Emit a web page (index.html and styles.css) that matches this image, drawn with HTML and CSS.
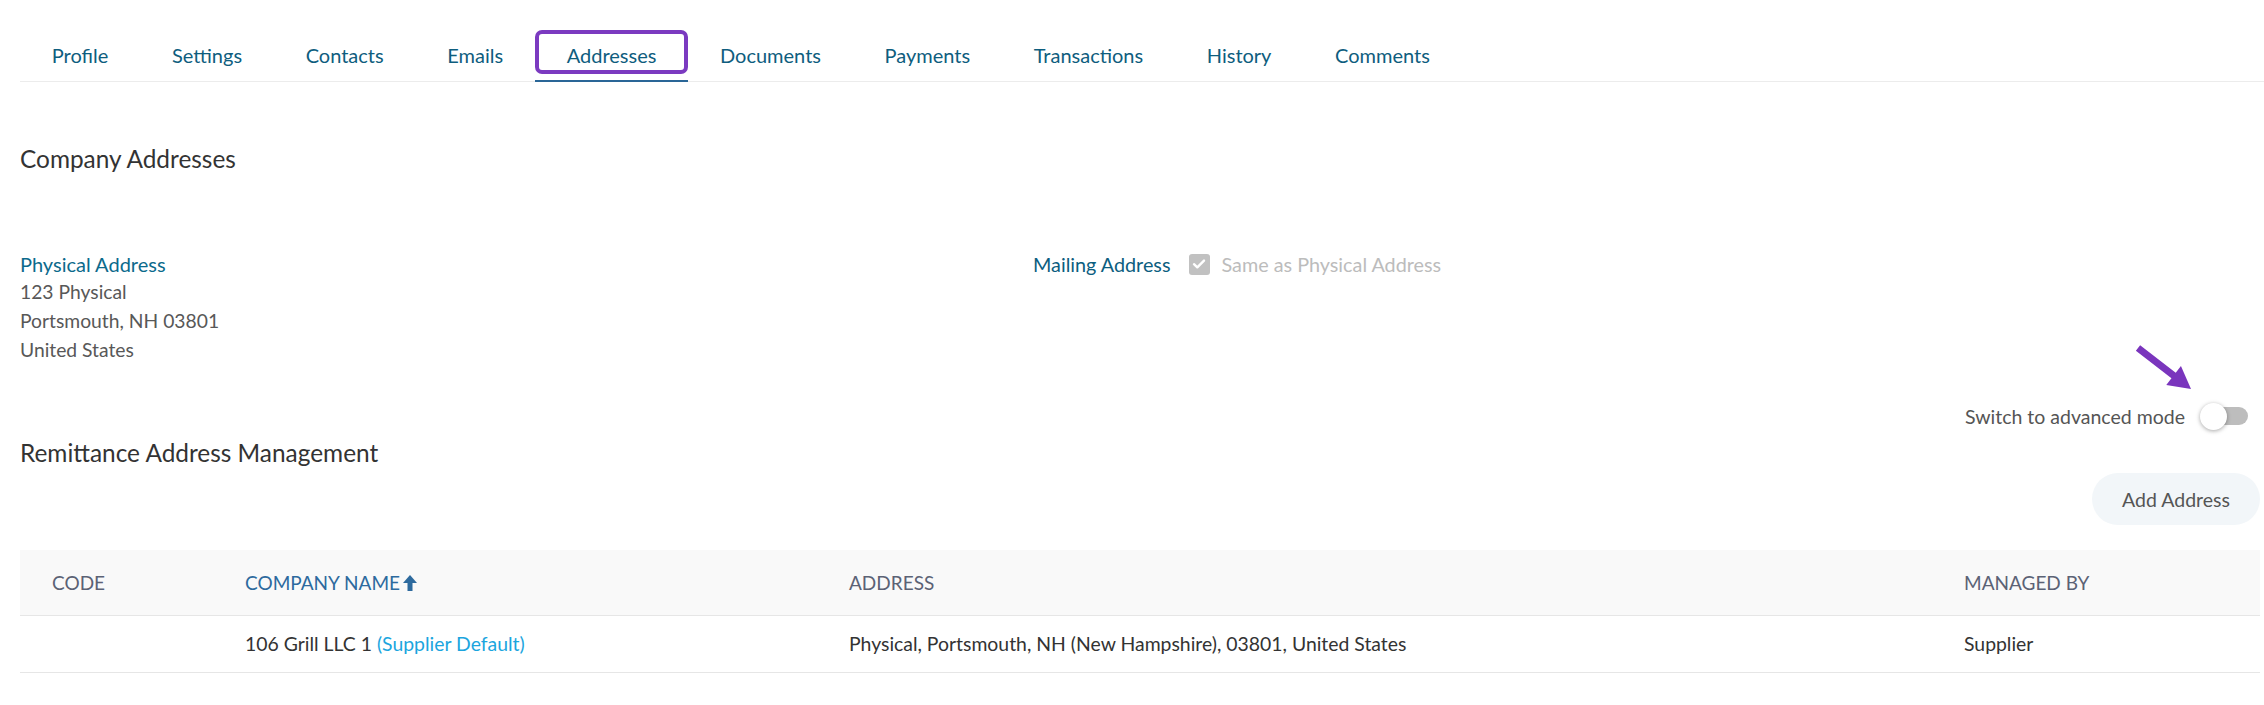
FILE: index.html
```html
<!DOCTYPE html>
<html>
<head>
<meta charset="utf-8">
<link rel="stylesheet" href="styles.css">
</head>
<body>
<nav class="tabs">
  <a class="tab">Profile</a>
  <a class="tab">Settings</a>
  <a class="tab">Contacts</a>
  <a class="tab">Emails</a>
  <a class="tab active">Addresses<span class="highlight"></span></a>
  <a class="tab">Documents</a>
  <a class="tab">Payments</a>
  <a class="tab">Transactions</a>
  <a class="tab">History</a>
  <a class="tab">Comments</a>
</nav>
<main class="content">
  <h2 class="section-title">Company Addresses</h2>
  <div class="addresses">
    <div class="address">
      <div class="address-label">Physical Address</div>
      <div class="address-line">123 Physical</div>
      <div class="address-line">Portsmouth, NH 03801</div>
      <div class="address-line">United States</div>
    </div>
    <div class="mailing">
      <span class="mailing-label">Mailing Address</span>
      <span class="checkbox"><svg width="14" height="12" viewBox="0 0 14 12"><path d="M2 6.2 L5.3 9.3 L12 2.6" fill="none" stroke="#fff" stroke-width="2.4" stroke-linecap="round" stroke-linejoin="round"/></svg></span>
      <span class="mailing-same">Same as Physical Address</span>
    </div>
  </div>
  <div class="switch-row">
    <span class="switch-label">Switch to advanced mode</span>
    <span class="toggle"><span class="knob"></span>
      <svg class="arrow" width="60" height="50" viewBox="0 0 60 50"><path d="M6.14 1.23 L41.74 28.73 L46.94 22.01 L57 45 L32.26 40.99 L37.46 34.27 L1.86 6.77 Z" fill="#7a35bd"/></svg>
    </span>
  </div>
  <h2 class="section-title remit">Remittance Address Management</h2>
  <div class="actions">
    <button class="btn">Add Address</button>
  </div>
  <table class="grid">
    <thead>
      <tr>
        <th class="c-code">CODE</th>
        <th class="c-name sorted">COMPANY NAME<svg width="14" height="16" viewBox="0 0 14 16"><path d="M7 0 L14 8 L9.5 8 L9.5 16 L4.5 16 L4.5 8 L0 8 Z" fill="#2d6a9e"/></svg></th>
        <th class="c-addr">ADDRESS</th>
        <th class="c-by">MANAGED BY</th>
      </tr>
    </thead>
    <tbody>
      <tr>
        <td></td>
        <td>106 Grill LLC 1 <span class="default">(Supplier Default)</span></td>
        <td>Physical, Portsmouth, NH (New Hampshire), 03801, United States</td>
        <td>Supplier</td>
      </tr>
    </tbody>
  </table>
</main>
</body>
</html>
```
FILE: styles.css
```css
* { box-sizing: border-box; }
body {
  margin: 0;
  font-family: Lato, "Open Sans", sans-serif;
  background: #fff;
  color: #333;
}
.tabs {
  display: flex;
  margin: 30px 0 0 20px;
  border-bottom: 1px solid #ececec;
}
.tab {
  position: relative;
  display: block;
  padding: 0 31.8px;
  height: 52px;
  line-height: 50px;
  font-size: 20px;
  color: #0e5d7e;
  margin-bottom: -1px;
  border-bottom: 2px solid transparent;
}
.tab.active { border-bottom-color: #2a6697; }
.highlight {
  position: absolute;
  left: 0;
  right: 0;
  top: 0;
  height: 44px;
  border: 4px solid #7b3ac0;
  border-radius: 7px;
}
.content { padding: 0 4px 0 20px; }
.section-title {
  margin: 0;
  font-size: 24.4px;
  font-weight: 400;
  color: #333;
  line-height: 30px;
}
.content > .section-title:first-child { margin-top: 62px; }
.addresses {
  display: grid;
  grid-template-columns: 1013px 1fr;
  margin-top: 77px;
}
.address-label { color: #0c6a8c; font-size: 20px; line-height: 26px; }
.address-line { color: #585858; font-size: 19.3px; line-height: 29px; }
.mailing { display: flex; align-items: center; height: 26px; }
.mailing-label { color: #0c5e80; font-size: 19.8px; }
.checkbox {
  width: 21px; height: 21px;
  background: #c1c1c1;
  border-radius: 3px;
  margin: 0 12px 0 18px;
  display: flex; align-items: center; justify-content: center;
}
.mailing-same { color: #bcbcbc; font-size: 19.8px; }
.switch-row {
  display: flex;
  justify-content: flex-end;
  align-items: center;
  margin-top: 38px;
  padding-right: 12px;
  height: 28px;
}
.switch-label { font-size: 19.5px; color: #555; margin-right: 17px; }
.toggle {
  position: relative;
  width: 46px; height: 18px;
  background: #bdbdbd;
  border-radius: 9px;
}
.knob {
  position: absolute;
  left: -2px; top: -4px;
  width: 27px; height: 27px;
  border-radius: 50%;
  background: #fff;
  box-shadow: 0 1px 4px rgba(0,0,0,0.35);
}
.arrow {
  position: absolute;
  left: -68px;
  top: -63px;
}
.remit { margin-top: 8px; }
.actions { display: flex; justify-content: flex-end; margin-top: 5px; }
.btn {
  font-family: inherit;
  font-size: 19.5px;
  color: #555;
  background: #f2f6f9;
  border: none;
  border-radius: 26px;
  height: 52px;
  width: 168px;
}
.grid {
  width: 100%;
  border-collapse: collapse;
  margin-top: 25px;
}
.grid th {
  background: #f9f9f9;
  height: 65px;
  text-align: left;
  font-weight: 400;
  font-size: 19px;
  color: #5b6275;
  border-bottom: 1px solid #e6e6e6;
  padding: 0;
}
.grid th svg { margin-left: 3px; vertical-align: -1px; }
.grid th.sorted { color: #2d6a9e; }
.grid td {
  height: 57px;
  font-size: 19.4px;
  color: #333;
  border-bottom: 1px solid #e6e6e6;
  padding: 0;
}
.c-code { width: 225px; padding-left: 32px !important; }
.c-name { width: 604px; }
.c-addr { width: 1115px; }
.default { color: #1ba5de; }
```
